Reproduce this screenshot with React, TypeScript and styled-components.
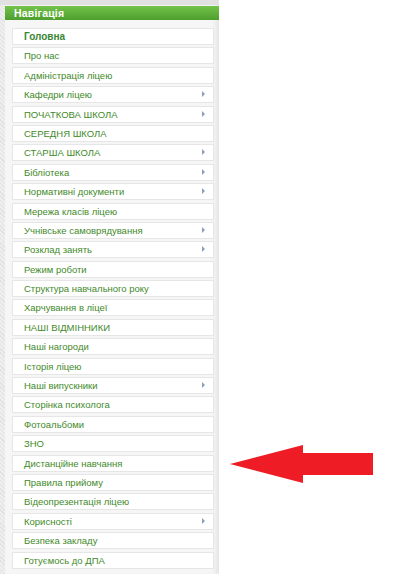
import styled, { createGlobalStyle } from 'styled-components';

const GlobalStyle = createGlobalStyle`
	html, body {
		margin: 0;
		padding: 0;
		background: #ffffff;
	}
	body {
		font-family: 'Liberation Sans', Arial, sans-serif;
	}
`;

type TNavItem = {
	title: string;
	bold?: boolean;
	sub?: boolean;
};

const navItems: TNavItem[] = [
	{ title: 'Головна', bold: true },
	{ title: 'Про нас' },
	{ title: 'Адміністрація ліцею' },
	{ title: 'Кафедри ліцею', sub: true },
	{ title: 'ПОЧАТКОВА ШКОЛА', sub: true },
	{ title: 'СЕРЕДНЯ ШКОЛА' },
	{ title: 'СТАРША ШКОЛА', sub: true },
	{ title: 'Бібліотека', sub: true },
	{ title: 'Нормативні документи', sub: true },
	{ title: 'Мережа класів ліцею' },
	{ title: 'Учнівське самоврядування', sub: true },
	{ title: 'Розклад занять', sub: true },
	{ title: 'Режим роботи' },
	{ title: 'Структура навчального року' },
	{ title: 'Харчування в ліцеї' },
	{ title: 'НАШІ ВІДМІННИКИ' },
	{ title: 'Наші нагороди' },
	{ title: 'Історія ліцею' },
	{ title: 'Наші випускники', sub: true },
	{ title: 'Сторінка психолога' },
	{ title: 'Фотоальбоми' },
	{ title: 'ЗНО' },
	{ title: 'Дистанційне навчання' },
	{ title: 'Правила прийому' },
	{ title: 'Відеопрезентація ліцею' },
	{ title: 'Корисності', sub: true },
	{ title: 'Безпека закладу' },
	{ title: 'Готуємось до ДПА' }
];

const Page = styled.div`
	position: relative;
	display: flex;
	width: 398px;
	height: 574px;
	overflow: hidden;
	background: #ffffff;
`;

const Column = styled.div`
	display: flex;
	flex-direction: column;
	width: 219px;
	height: 100%;
`;

const TopBar = styled.div`
	height: 5px;
	background: #e1e1e1;
`;

const Body = styled.div`
	display: flex;
	flex: 1;
`;

const Texture = styled.div`
	width: 5px;
	background-color: #eeeeee;
	background-image: repeating-linear-gradient(
		45deg,
		#e2e2e2 0 1px,
		transparent 1px 3px
	);
`;

const Panel = styled.div`
	display: flex;
	flex-direction: column;
	flex: 1;
	padding-top: 1px;
	background: #f6f6f6;
	box-shadow: inset -6px 0 5px -3px #e4e4e4;
`;

const Header = styled.div`
	height: 14px;
	padding-left: 9px;
	background: linear-gradient(#72c24a, #4d9f2d);
	color: #ffffff;
	font-family: 'Liberation Sans', Arial, sans-serif;
	font-size: 10.5px;
	font-weight: bold;
	line-height: 14px;
	letter-spacing: 0.2px;
`;

const List = styled.ul`
	display: flex;
	flex-direction: column;
	gap: 2.4px;
	margin: 0;
	padding: 8px 5px 0 7px;
	list-style: none;
`;

const Item = styled.li<{ $bold?: boolean }>`
	position: relative;
	box-sizing: border-box;
	height: 17px;
	padding-left: 11px;
	background: #ffffff;
	border: 1px solid #e6e6e6;
	color: ${({ $bold }) => ($bold ? '#3a8634' : '#3f8a2a')};
	font-family: 'Liberation Sans', Arial, sans-serif;
	font-size: ${({ $bold }) => ($bold ? '10px' : '9.5px')};
	font-weight: ${({ $bold }) => ($bold ? 'bold' : 'normal')};
	line-height: 15px;
	white-space: nowrap;
`;

const SubMark = styled.span`
	position: absolute;
	top: 4px;
	right: 8px;
	width: 0;
	height: 0;
	border-top: 3px solid transparent;
	border-bottom: 3px solid transparent;
	border-left: 3px solid #8d9dbb;
`;

const ArrowOverlay = styled.svg`
	position: absolute;
	left: 228px;
	top: 443px;
`;

const App = () => {
	return (
		<>
			<GlobalStyle />
			<Page>
				<Column>
					<TopBar />
					<Body>
						<Texture />
						<Panel>
							<Header>Навігація</Header>
							<List>
								{navItems.map(item => (
									<Item key={item.title} $bold={item.bold}>
										{item.title}
										{item.sub && <SubMark />}
									</Item>
								))}
							</List>
						</Panel>
					</Body>
				</Column>
				<ArrowOverlay width="148" height="44" viewBox="0 0 148 44">
					<path
						d="M2 21 L75 2 L75 10 L145 10 L145 32 L75 32 L75 40 Z"
						fill="#ee1c24"
					/>
				</ArrowOverlay>
			</Page>
		</>
	);
};

export default App;
